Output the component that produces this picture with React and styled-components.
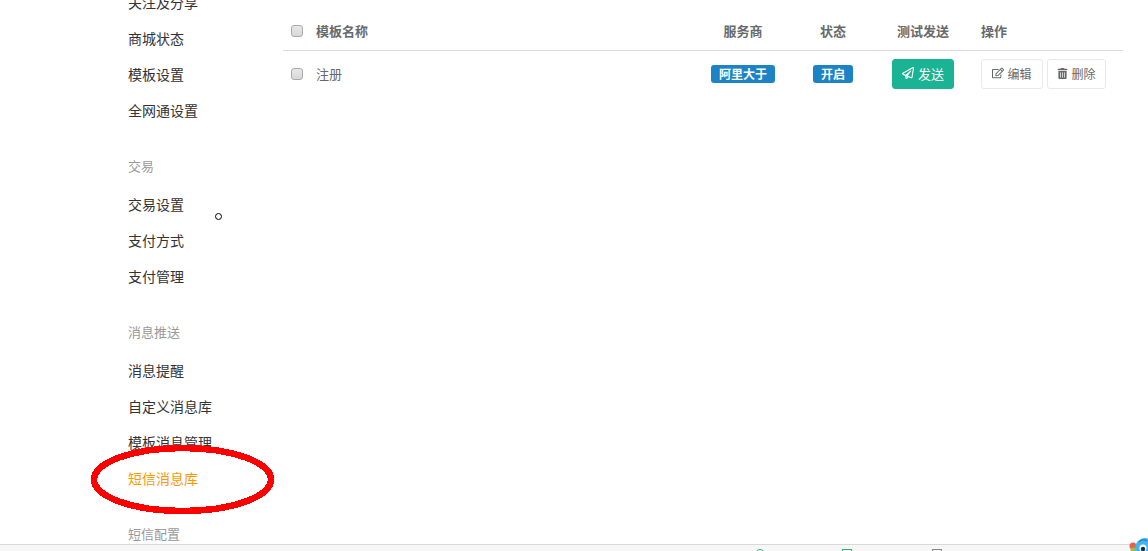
import React from "react";
import styled, { createGlobalStyle } from "styled-components";
import { FaRegPaperPlane, FaRegEdit, FaTrashAlt } from "react-icons/fa";

const GlobalStyle = createGlobalStyle`
  html, body {
    margin: 0;
    padding: 0;
    background: #fff;
  }
  * {
    box-sizing: border-box;
  }
`;

const Page = styled.div`
  position: relative;
  display: flex;
  flex-direction: column;
  width: 1148px;
  height: 551px;
  overflow: hidden;
  font-family: "Noto Sans CJK SC", "Liberation Sans", sans-serif;
`;
const Main = styled.div`
  flex: 1;
  min-height: 0;
  display: flex;
  overflow: hidden;
`;
const Sidebar = styled.nav`
  flex: 0 0 283px;
  margin-top: -16px;
  padding-left: 128px;
`;
const GroupTitle = styled.div`
  height: 36px;
  margin: 20px 0 2px;
  line-height: 36px;
  font-size: 13px;
  color: #999;
`;
const NavItem = styled.div`
  height: 36px;
  line-height: 36px;
  font-size: 14px;
  color: ${(p) => (p.$active ? "#ff9900" : "#333")};
`;
const Content = styled.div`
  flex: 0 0 840px;
  margin-top: 12px;
`;
const Row = styled.div`
  display: grid;
  grid-template-columns: 33px 382px 90px 90px 90px 155px;
  align-items: center;
  height: ${(p) => (p.$head ? "39px" : "46px")};
  border-bottom: ${(p) => (p.$head ? "1px solid #ddd" : "none")};
  font-size: 13px;
  font-weight: ${(p) => (p.$head ? 700 : 400)};
  color: #676a6c;
`;
const Check = styled.input.attrs({ type: "checkbox" })`
  appearance: none;
  display: block;
  width: 12px;
  height: 12px;
  margin: 0 0 0 8px;
  border: 1px solid #a9a9a9;
  border-radius: 3px;
  background: linear-gradient(#e8e8e8, #d8d8d8);
`;
const TextCell = styled.div`
  padding-bottom: 2px;
  padding-left: ${(p) => p.$indent || 0}px;
  text-align: ${(p) => (p.$center ? "center" : "left")};
`;
const Centered = styled.div`
  display: flex;
  justify-content: center;
`;
const Actions = styled.div`
  display: flex;
  gap: 4px;
  padding-left: 13px;
`;
const Badge = styled.span`
  display: inline-block;
  width: ${(p) => p.$width}px;
  height: 18px;
  border-radius: 3px;
  background: #1c84c6;
  color: #fff;
  font-size: 12px;
  font-weight: 700;
  line-height: 17px;
  text-align: center;
`;
const SendButton = styled.button`
  display: flex;
  align-items: center;
  justify-content: center;
  gap: 4px;
  width: 62px;
  height: 30px;
  padding: 0 0 2px;
  border: 1px solid #1ab394;
  border-radius: 3px;
  background: #1ab394;
  color: #fff;
  font: inherit;
  font-size: 13px;
  svg {
    font-size: 12px;
  }
`;
const ActionButton = styled.button`
  display: flex;
  align-items: center;
  justify-content: center;
  gap: 3px;
  width: ${(p) => p.$width}px;
  height: 30px;
  padding: 0 0 2px;
  border: 1px solid #e7eaec;
  border-radius: 3px;
  background: #fff;
  color: #676a6c;
  font: inherit;
  font-size: 12px;
  font-weight: 400;
  svg {
    font-size: ${(p) => p.$icon}px;
  }
`;
const Footer = styled.footer`
  flex: 0 0 7px;
  height: 7px;
  min-height: 0;
  overflow: hidden;
  display: grid;
  grid-template-columns: 87px 90px 10px;
  padding: 4px 0 0 755px;
  border-top: 1px solid #d9d9d9;
  background: #f7f7f7;
`;
const FooterIcon = styled.span`
  display: block;
  width: 10px;
  height: 10px;
  border: 1px solid ${(p) => p.$color};
  border-radius: ${(p) => (p.$round ? "50%" : "0")};
`;
const Annotation = styled.svg`
  position: absolute;
  left: 88px;
  top: 442px;
`;
const Cursor = styled.span`
  position: absolute;
  left: 215px;
  top: 213px;
  width: 7px;
  height: 7px;
  border: 1px solid #000;
  border-radius: 50%;
  background: #fff;
`;
const Mascot = styled.svg`
  position: absolute;
  right: 0;
  top: 536px;
`;

const groups = [
  { items: ["关注及分享", "商城状态", "模板设置", "全网通设置"] },
  { title: "交易", items: ["交易设置", "支付方式", "支付管理"] },
  {
    title: "消息推送",
    items: ["消息提醒", "自定义消息库", "模板消息管理", "短信消息库"],
  },
  { title: "短信配置", items: [] },
];

const App = () => {
  return (
    <Page>
      <GlobalStyle />
      <Main>
        <Sidebar>
          {groups.map((group, i) => (
            <React.Fragment key={i}>
              {group.title && <GroupTitle>{group.title}</GroupTitle>}
              {group.items.map((item) => (
                <NavItem key={item} $active={item === "短信消息库"}>
                  {item}
                </NavItem>
              ))}
            </React.Fragment>
          ))}
        </Sidebar>
        <Content>
          <Row $head>
            <Check />
            <TextCell>模板名称</TextCell>
            <TextCell $center>服务商</TextCell>
            <TextCell $center>状态</TextCell>
            <TextCell $center>测试发送</TextCell>
            <TextCell $indent={13}>操作</TextCell>
          </Row>
          <Row>
            <Check />
            <TextCell>注册</TextCell>
            <Centered>
              <Badge $width={64}>阿里大于</Badge>
            </Centered>
            <Centered>
              <Badge $width={40}>开启</Badge>
            </Centered>
            <Centered>
              <SendButton>
                <FaRegPaperPlane />
                发送
              </SendButton>
            </Centered>
            <Actions>
              <ActionButton $width={62} $icon={12}>
                <FaRegEdit />
                编辑
              </ActionButton>
              <ActionButton $width={59} $icon={11}>
                <FaTrashAlt />
                删除
              </ActionButton>
            </Actions>
          </Row>
        </Content>
      </Main>
      <Footer>
        <FooterIcon $color="#2fb56f" $round />
        <FooterIcon $color="#2fb56f" />
        <FooterIcon $color="#888" />
      </Footer>
      <Annotation width="190" height="76" viewBox="0 0 190 76" shapeRendering="crispEdges">
        <ellipse cx="94.5" cy="37.5" rx="88.5" ry="31.5" fill="none" stroke="#ff0000" strokeWidth="6.5" />
      </Annotation>
      <Cursor />
      <Mascot width="20" height="15" viewBox="0 0 20 15">
        <circle cx="5" cy="10" r="3.5" fill="#e8604c" />
        <circle cx="5" cy="14" r="2.5" fill="#8fc04a" />
        <circle cx="17" cy="12" r="10" fill="#45b4ee" />
        <path d="M11 6 Q15 2 19 5" fill="none" stroke="#1a6fb0" strokeWidth="1" />
        <circle cx="15" cy="12" r="3.6" fill="#fff" />
        <circle cx="15" cy="13" r="2.2" fill="#12304f" />
      </Mascot>
    </Page>
  );
};

export default App;
